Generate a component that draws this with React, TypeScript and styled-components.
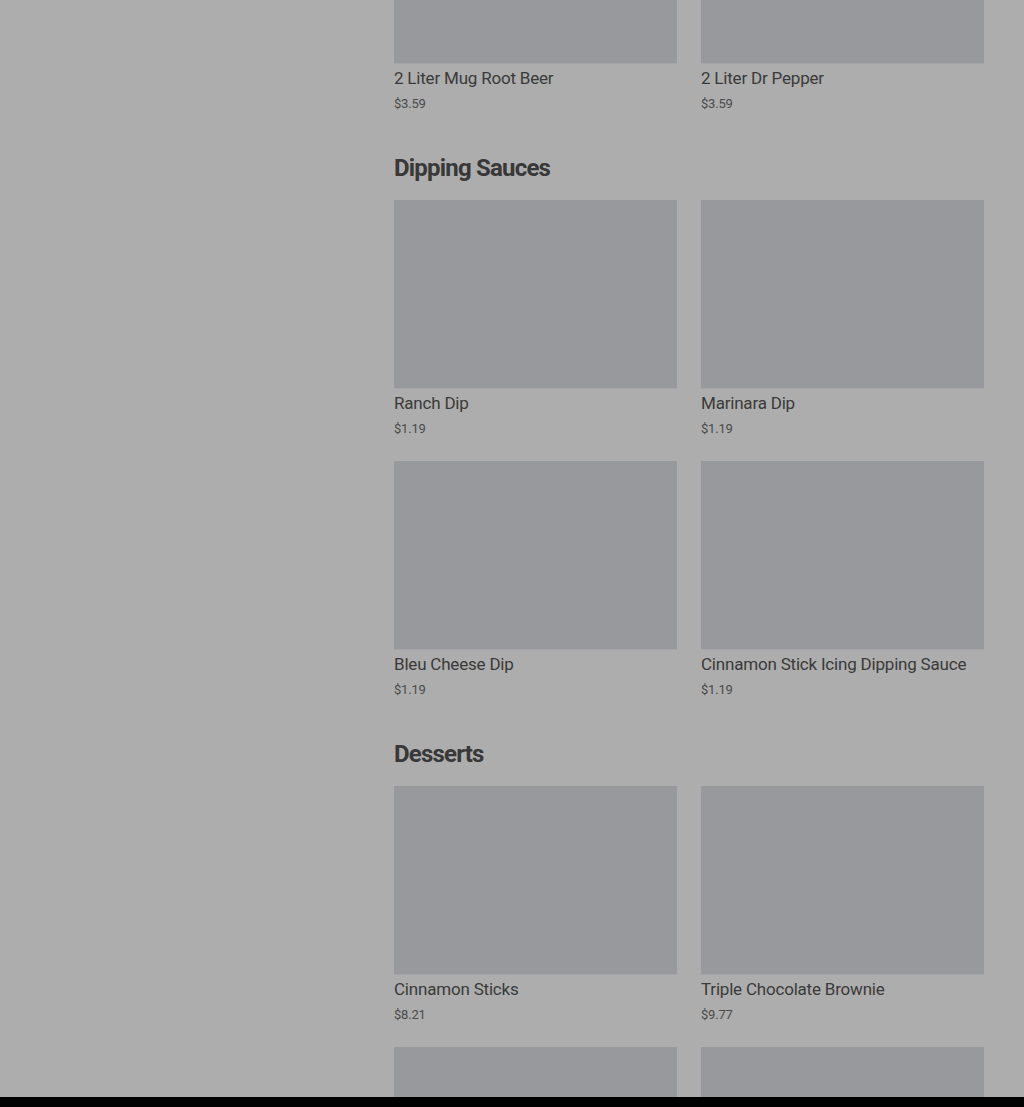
import React from "react";
import styled, { createGlobalStyle } from "styled-components";

const Global = createGlobalStyle`
  html, body { margin: 0; padding: 0; background: #adadad; }
  body { font-family: Roboto, "Liberation Sans", sans-serif; }
  * { box-sizing: border-box; }
`;

const Page = styled.div`
  height: 1107px;
  display: flex;
  flex-direction: column;
  overflow: hidden;
  background: #adadad;
`;

const Main = styled.main`
  flex: 1;
  overflow: hidden;
  display: grid;
  grid-template-columns: 394px 590px 1fr;
`;

const Sidebar = styled.aside``;

const Menu = styled.div`
  margin-top: -125px;
  display: flex;
  flex-direction: column;
  gap: 39px;
`;

const Section = styled.section`
  display: flex;
  flex-direction: column;
`;

const Heading = styled.h2`
  margin: 0 0 16px;
  font-size: 24px;
  line-height: 32px;
  font-weight: 700;
  letter-spacing: -0.8px;
  color: #383838;
`;

const Grid = styled.div`
  display: grid;
  grid-template-columns: 283px 283px;
  column-gap: 24px;
  row-gap: 23px;
`;

const Card = styled.div`
  display: flex;
  flex-direction: column;
`;

const Thumb = styled.div`
  height: 188px;
  background: #97999d;
  box-shadow: 0 1px 0 #a3a5a8;
`;

const Title = styled.div`
  margin-top: 5px;
  font-size: 17px;
  line-height: 20px;
  letter-spacing: -0.2px;
  color: #3a3a3a;
`;

const Price = styled.div`
  margin-top: 7px;
  font-size: 13px;
  line-height: 18px;
  letter-spacing: -0.2px;
  color: #4a4a4a;
`;

const Footer = styled.div`
  height: 10px;
  background: #000;
`;

type Item = { name?: string; price?: string };

const sections: { title?: string; items: Item[] }[] = [
  {
    items: [
      { name: "2 Liter Mug Root Beer", price: "$3.59" },
      { name: "2 Liter Dr Pepper", price: "$3.59" },
    ],
  },
  {
    title: "Dipping Sauces",
    items: [
      { name: "Ranch Dip", price: "$1.19" },
      { name: "Marinara Dip", price: "$1.19" },
      { name: "Bleu Cheese Dip", price: "$1.19" },
      { name: "Cinnamon Stick Icing Dipping Sauce", price: "$1.19" },
    ],
  },
  {
    title: "Desserts",
    items: [
      { name: "Cinnamon Sticks", price: "$8.21" },
      { name: "Triple Chocolate Brownie", price: "$9.77" },
      {},
      {},
    ],
  },
];

export default function App() {
  return (
    <>
      <Global />
      <Page>
        <Main>
          <Sidebar />
          <Menu>
            {sections.map((s, i) => (
              <Section key={i}>
                {s.title && <Heading>{s.title}</Heading>}
                <Grid>
                  {s.items.map((it, j) => (
                    <Card key={j}>
                      <Thumb />
                      {it.name && <Title>{it.name}</Title>}
                      {it.price && <Price>{it.price}</Price>}
                    </Card>
                  ))}
                </Grid>
              </Section>
            ))}
          </Menu>
          <div />
        </Main>
        <Footer />
      </Page>
    </>
  );
}
